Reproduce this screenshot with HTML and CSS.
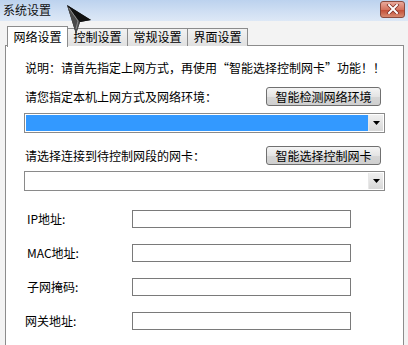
FILE: index.html
```html
<!DOCTYPE html>
<html lang="zh-CN">
<head>
<meta charset="utf-8">
<title>系统设置</title>
<link rel="stylesheet" href="styles.css">
</head>
<body>
<div class="window">
  <div class="titlebar">
    <span class="title">系统设置</span>
    <div class="close">
      <svg width="14" height="10" viewBox="0 0 14 10"><path d="M3 1 L11 9 M11 1 L3 9" stroke="#7a2a20" stroke-width="3.4" stroke-linecap="square"/><path d="M3 1 L11 9 M11 1 L3 9" stroke="#fff" stroke-width="2" stroke-linecap="square"/></svg>
    </div>
  </div>
  <div class="tabs">
    <div class="tab active">网络设置</div>
    <div class="tab">控制设置</div>
    <div class="tab">常规设置</div>
    <div class="tab">界面设置</div>
  </div>
  <div class="panel">
    <p class="note">说明：请首先指定上网方式，再使用“智能选择控制网卡”功能！！</p>
    <div class="row">
      <span>请您指定本机上网方式及网络环境：</span>
      <div class="btn">智能检测网络环境</div>
    </div>
    <div class="select sel1">
      <div class="sel-value selected"></div>
      <div class="arrow"><svg width="7" height="4" viewBox="0 0 7 4"><path d="M0 0 H7 L3.5 4 Z" fill="#000"/></svg></div>
    </div>
    <div class="row row2">
      <span>请选择连接到待控制网段的网卡：</span>
      <div class="btn">智能选择控制网卡</div>
    </div>
    <div class="select sel2">
      <div class="sel-value"></div>
      <div class="arrow"><svg width="7" height="4" viewBox="0 0 7 4"><path d="M0 0 H7 L3.5 4 Z" fill="#000"/></svg></div>
    </div>
    <div class="fields">
      <div class="field"><span class="label">IP地址:</span><div class="input"></div></div>
      <div class="field"><span class="label">MAC地址:</span><div class="input"></div></div>
      <div class="field"><span class="label">子网掩码:</span><div class="input"></div></div>
      <div class="field"><span class="label shift">网关地址:</span><div class="input"></div></div>
    </div>
  </div>
  <svg class="cursor" width="28" height="32" viewBox="0 0 28 32">
    <path d="M1 1 L25 16 L14 18 L10 30 Z" fill="#1a1a1a"/>
    <path d="M1 1 L14 18 L10 30 Z" fill="#4a4a4a"/>
    <path d="M1 1 L25 16 L14 18 Z" fill="#111"/>
    <path d="M3 4 L12 17 L10 25" stroke="#8a8a8a" stroke-width="1" fill="none"/>
  </svg>
</div>
</body>
</html>
```
FILE: styles.css
```css
* { box-sizing: border-box; }
html, body { margin: 0; padding: 0; }
body {
  width: 408px;
  height: 345px;
  overflow: hidden;
  font-family: "Noto Sans CJK SC", "DejaVu Sans", sans-serif;
  font-size: 12px;
  color: #000;
  background: #f3f3f3;
}
.window {
  position: relative;
  width: 408px;
  height: 345px;
  display: flex;
  flex-direction: column;
}
.titlebar {
  height: 21px;
  display: flex;
  align-items: center;
  justify-content: space-between;
  padding: 0 3px 0 3px;
  background: linear-gradient(to bottom, #bcd2ee, #d4e2f4 70%, #dde8f6);
}
.title { font-size: 12px; line-height: 16px; margin-top: -1px; color: #111; }
.close {
  width: 25px;
  height: 17px;
  margin-top: -3px;
  border: 1px solid #8a4a3e;
  border-radius: 3px;
  background: linear-gradient(to bottom, #e9a99c, #d5735f 50%, #c24a33 51%, #d88a70);
  display: flex;
  align-items: center;
  justify-content: center;
}
.tabs {
  display: flex;
  align-items: flex-end;
  height: 25px;
  padding-left: 7px;
  margin-top: -1px;
  position: relative;
  z-index: 1;
}
.tab {
  height: 18px;
  width: 61px;
  line-height: 16px;
  text-align: center;
  border: 1px solid #8c8c8c;
  border-bottom: none;
  background: linear-gradient(to bottom, #f2f2f2, #e0e0e0);
  margin-bottom: -1px;
  white-space: nowrap;
}
.tab + .tab { margin-left: -1px; }
.tab.active {
  height: 21px;
  line-height: 19px;
  background: #fff;
  margin-bottom: -2px;
  position: relative;
  z-index: 2;
}
.panel {
  flex: 1;
  margin: 0 4px 0 5px;
  background: #fff;
  border: 1px solid #8c8c8c;
  border-bottom: none;
  padding: 13px 18px 0 18px;
}
.note { margin: 0 0 0 1px; line-height: 17px; }
.row {
  display: flex;
  align-items: center;
  justify-content: space-between;
  margin-top: 11px;
  padding-left: 1px;
}
.row2 { margin-top: 13px; }
.btn {
  height: 19px;
  width: 115px;
  border: 1px solid #707070;
  border-radius: 3px;
  background: linear-gradient(to bottom, #f4f4f4, #e4e4e4 50%, #d6d6d6 51%, #cfcfcf);
  text-align: center;
  line-height: 17px;
  margin-right: 4px;
}
.select {
  display: flex;
  height: 20px;
  border: 1px solid #8a8a8a;
  margin-top: 7px;
  background: #fff;
  padding: 1px;
}
.sel2 { margin-top: 6px; }
.sel-value { flex: 1; }
.sel-value.selected { background: #3399ff; }
.arrow {
  width: 15px;
  display: flex;
  align-items: center;
  justify-content: center;
  background: linear-gradient(to bottom, #f0f0f0, #d8d8d8);
  border-left: 1px solid #e8e8e8;
}
.fields {
  display: flex;
  flex-direction: column;
  gap: 17px;
  margin-top: 19px;
}
.field {
  display: flex;
  align-items: center;
  height: 17px;
}
.label {
  width: 108px;
  padding-left: 3px;
}
.label.shift { padding-left: 1px; }
.input {
  width: 219px;
  height: 18px;
  border: 1px solid #7a7a7a;
  background: #fff;
}
.cursor {
  position: absolute;
  left: 66px;
  top: 4px;
  z-index: 5;
}
```
